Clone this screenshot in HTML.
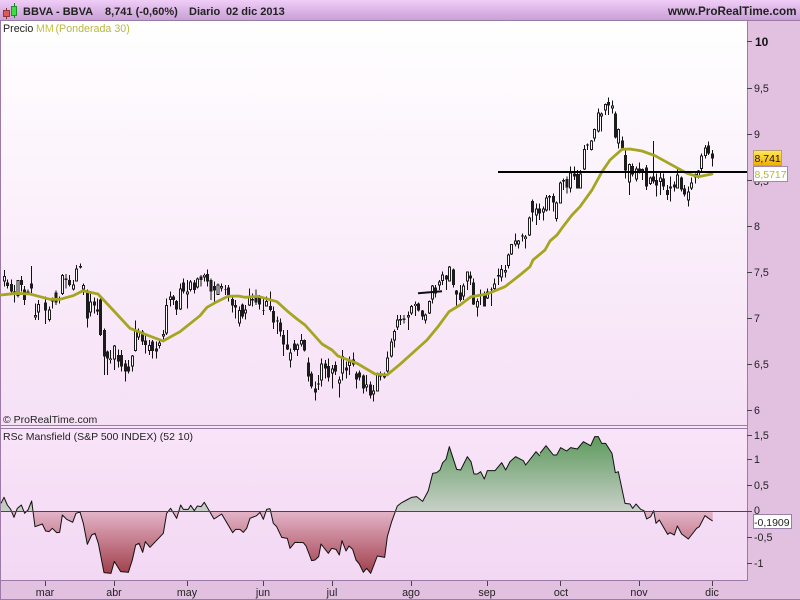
<!DOCTYPE html>
<html><head><meta charset="utf-8"><title>BBVA</title>
<style>
html,body{margin:0;padding:0;background:#e2c0e0}
svg{display:block}
text{font-family:"Liberation Sans",Arial,sans-serif;font-size:10.7px;fill:#222}
</style></head><body>
<svg width="800" height="600" viewBox="0 0 800 600" xmlns="http://www.w3.org/2000/svg">
<defs>
<linearGradient id="h" x1="0" y1="0" x2="0" y2="1"><stop offset="0" stop-color="#f0cdf7"/><stop offset="1" stop-color="#c8a0d6"/></linearGradient>
<linearGradient id="m" x1="0" y1="0" x2="0" y2="1"><stop offset="0" stop-color="#ffffff"/><stop offset="1" stop-color="#f6e0f6"/></linearGradient>
<linearGradient id="l" x1="0" y1="0" x2="0" y2="1"><stop offset="0" stop-color="#f8e4f8"/><stop offset="1" stop-color="#f3d8f4"/></linearGradient>
<linearGradient id="g" x1="0" y1="0" x2="0" y2="1"><stop offset="0" stop-color="#ffe95a"/><stop offset="1" stop-color="#f0ae00"/></linearGradient>
<linearGradient id="a" gradientUnits="userSpaceOnUse" x1="0" y1="50" x2="0" y2="460">
<stop offset="0" stop-color="#5c9a5c"/><stop offset=".546" stop-color="#c9d0c9"/><stop offset=".546" stop-color="#e4b4c8"/><stop offset="1" stop-color="#a2404c"/></linearGradient>
</defs>
<rect width="800" height="600" fill="#e2c0e0"/>
<rect width="800" height="20" fill="url(#h)"/>
<rect y="20" width="800" height="1" fill="#9c7aa8"/>
<rect x="1" y="21" width="746" height="404" fill="url(#m)"/>
<rect x="1" y="426" width="746" height="154" fill="url(#l)"/>
<rect y="425" width="747" height="1" fill="#9c7aa8"/>
<rect y="428" width="747" height="1" fill="#9c7aa8"/>
<rect y="580" width="747" height="1" fill="#9c7aa8"/>
<rect x="747" y="21" width="1" height="560" fill="#9c7aa8"/>
<rect x="0" y="20" width="1" height="580" fill="#9c7aa8"/>
<rect y="599" width="800" height="1" fill="#9c7aa8"/>

<g shape-rendering="crispEdges">
<path d="M6.500 8V19" stroke="#803030" fill="none"/><rect x="3.500" y="10.500" width="6" height="6" fill="#e05858" stroke="#903838"/>
<path d="M14.500 3V18" stroke="#208020" fill="none"/><rect x="11.500" y="6.500" width="5" height="9" fill="#40dc48" stroke="#209028"/>
</g>
<text x="23" y="15" style="font-weight:bold;font-size:11px">BBVA - BBVA</text>
<text x="105" y="15" style="font-weight:bold;font-size:11px">8,741 (-0,60%)</text>
<text x="189" y="15" style="font-weight:bold;font-size:11px">Diario</text>
<text x="226" y="15" style="font-weight:bold;font-size:11px">02 dic 2013</text>
<text x="796.500" y="15" text-anchor="end" style="font-weight:bold;font-size:11.700px">www.ProRealTime.com</text>
<text x="3" y="32">Precio</text><text x="36" y="32" style="fill:#c8c040">MM</text><text x="55.500" y="32" style="fill:#b8b840">(Ponderada 30)</text>

<g fill="none" stroke-linecap="butt" shape-rendering="crispEdges">
<g transform="translate(0 250) scale(.33333)">
<path stroke="#111" stroke-width="3" d="M13 60V110M23 88V115M34 88V135M44 105V158M54 90V142M64 78V125M74 108V165M84 118V135M94 48V130M106 160V210M116 150V210M136 140V222M148 170V215M158 142V175M168 122V165M178 140V160M188 72V135M198 72V115M208 75V110M220 90V122M230 45V95M241 40V55M250 100V135M262 118V232M271 130V200M283 142V190M293 145V195M302 135V258M313 235V375M323 302V375M332 300V340M344 285V360M356 298V352M364 300V365M376 330V395M386 330V370M397 315V365M407 212V305M416 235V270M428 240V285M437 255V310M449 270V315M458 270V325M469 275V325M478 265V295M490 240V270M500 145V255M511 125V170M520 135V165M530 150V195M542 100V180M551 85V130M562 90V175M572 90V125M583 90V130M592 82V115"/>
<path stroke="#1c1c1c" stroke-width="9" d="M13 78V95M23 97V108M34 102V125M44 125V130M54 90V138M64 90V105M74 118V150M84 125V132M94 100V115M106 195V203M116 162V188M136 158V182M148 178V210M158 146V154M168 128V158M178 145V152M188 75V132M198 85V90M208 90V105M220 103V118M230 55V95M241 48V52M250 105V118M262 125V205M271 155V188M283 155V167M293 178V185M302 148V255M313 240V320M323 305V325M332 325V330M344 287V328M356 315V335M364 315V350M376 340V365M386 350V365M397 317V350M407 240V303M416 242V262M428 245V275M437 272V285M449 285V303M458 275V303M469 295V305M478 278V288M490 252V260M500 165V250M511 140V150M520 140V150M530 153V178M542 115V178M551 97V125M562 125V133M572 95V120M583 98V120M592 85V112"/>
<path stroke="#fff" stroke-width="3" d="M13 81V92M54 93V135M106 198V200M116 165V185M148 181V207M158 149V151M188 78V129M220 106V115M230 58V92M250 108V115M271 158V185M332 327V328M344 290V325M397 320V347M407 243V300M416 245V259M449 288V300M478 281V285M490 255V257M500 168V247M511 143V147M542 118V175M562 127V131M572 98V117M592 88V109"/>
</g>
<g transform="translate(200 250) scale(.33333)">
<path stroke="#111" stroke-width="3" d="M3 75V110M13 70V95M22 58V110M33 85V150M43 95V155M54 100V135M64 100V125M76 105V135M85 105V155M97 135V188M106 150V205M118 170V230M127 160V205M136 165V208M148 115V168M157 130V170M168 118V165M178 135V178M190 140V195M199 140V170M211 125V185M220 170V237M232 200V252M241 205V260M250 240V318M262 240V300M271 295V352M283 270V305M292 280V318M304 252V290M313 268V305M325 322V395M334 365V415M346 395V452M355 375V420M364 325V410M376 330V385M385 325V395M397 345V415M406 335V375M418 380V443M427 300V392M439 335V385M448 320V375M460 307V350M469 365V415M478 362V392M490 373V430M499 375V425M511 395V445M520 405V455M532 368V425M541 365V392M553 368V385M562 305V368M574 265V322M583 238V292M592 195V240"/>
<path stroke="#1c1c1c" stroke-width="9" d="M3 80V90M13 75V82M22 72V95M33 90V125M43 108V122M54 103V135M64 108V116M76 117V119M85 112V138M97 147V167M106 165V173M118 180V221M127 163V200M136 178V191M148 138V166M157 147V152M168 140V158M178 143V163M190 180V182M199 153V170M211 168V180M220 183V218M232 212V215M241 217V245M250 255V283M262 283V298M271 307V332M283 280V300M292 283V300M304 270V283M313 270V302M325 337V380M334 370V410M346 415V428M355 400V404M364 340V392M376 340V355M385 348V382M397 355V370M406 345V365M418 388V400M427 318V370M439 352V362M448 335V348M460 328V343M469 370V388M478 368V382M490 376V415M499 403V413M511 403V436M520 422V434M532 370V425M541 375V380M553 370V382M562 322V365M574 275V320M583 243V272M592 208V233"/>
<path stroke="#fff" stroke-width="3" d="M13 77V80M54 106V132M64 111V113M118 183V218M136 181V188M148 141V163M199 156V167M271 310V329M292 286V297M304 273V280M364 343V389M397 358V367M418 391V397M427 321V367M448 338V345M499 405V410M520 425V431M532 373V422M562 325V362M574 278V317M583 246V269M592 211V230"/>
</g>
<g transform="translate(380 170) scale(.33333)">
<path stroke="#111" stroke-width="3" d="M62 435V465M72 435V460M85 425V480M95 405V435M106 395V438M116 398V425M127 420V450M136 430V460M148 392V432M157 345V400M167 345V382M178 330V360M187 305V345M199 315V360M208 288V335M220 295V352M230 360V408M241 345V395M250 340V390M262 305V360M271 305V345M280 325V405M292 385V440M302 358V405M313 365V410M322 355V387M334 352V408M343 325V360M355 295V345M364 285V335M376 285V322M385 250V295M395 222V255M406 190V230M415 210V235M427 190V215M436 195V235M448 140V198M458 88V155M470 100V165M478 100V150M490 110V152M499 75V125M508 75V122M520 70V125M529 95V155M541 35V100"/>
<path stroke="#1c1c1c" stroke-width="9" d="M62 447V451M72 445V450M85 435V442M95 408V430M106 402V408M116 400V422M127 422V440M136 433V452M148 393V431M157 346V388M167 352V370M178 335V347M187 313V333M199 317V328M208 290V335M220 298V345M230 362V374M241 367V390M250 347V380M262 305V335M271 317V326M280 337V403M292 393V412M302 375V378M313 375V410M322 365V385M334 357V359M343 340V357M355 315V320M364 297V322M376 300V308M385 253V288M395 222V254M406 212V223M415 212V224M427 197V200M436 200V207M448 142V197M458 93V128M470 115V137M478 115V130M490 115V128M499 82V122M508 78V82M520 78V98M529 97V147M541 37V100"/>
<path stroke="#fff" stroke-width="3" d="M85 438V439M95 411V427M106 404V406M136 436V449M148 396V428M157 349V385M178 338V344M187 316V330M208 293V332M250 350V377M262 308V332M292 396V409M322 368V382M343 343V354M364 300V319M376 303V305M385 256V285M395 225V251M406 215V220M415 215V221M436 202V205M448 145V194M470 118V134M490 118V125M499 85V119M529 100V144M541 40V97"/>
</g>
<g transform="translate(560 0) scale(.33333)">
<path stroke="#111" stroke-width="3" d="M10 535V570M21 530V580M31 500V578M43 500V540M52 510V565M62 510V565M73 435V510M82 430V450M94 420V452M104 385V425M115 325V397M124 337V395M136 310V345M145 292V345M157 302V340M166 335V415M175 385V445M187 410V450M196 450V535M208 490V585M217 490V530M229 500V545M238 487V520M247 505V540M259 495V570M271 530V555M280 423V550M289 520V590M301 515V585M310 520V570M322 555V600M331 530V605M343 545V575M352 508V565M364 530V575M373 555V590M385 560V620M394 532V570M406 520V550M415 510V535M424 460V515M436 435V475M445 425V465M457 450V500"/>
<path stroke="#1c1c1c" stroke-width="9" d="M10 540V545M21 537V563M31 517V565M43 520V530M52 522V565M62 520V565M73 447V508M82 433V436M94 422V450M104 387V415M115 337V395M124 340V350M136 312V332M145 306V316M157 316V326M166 340V412M175 387V430M187 422V445M196 465V512M208 492V547M217 498V524M229 505V538M238 505V515M247 507V515M259 502V560M271 532V552M280 530V545M289 540V557M301 532V546M310 535V560M322 570V585M331 560V565M343 553V563M352 523V565M364 532V568M373 565V583M385 575V602M394 547V565M406 522V532M415 512V530M424 467V507M436 442V468M445 436V460M457 460V475"/>
<path stroke="#fff" stroke-width="3" d="M31 520V562M62 523V562M73 450V505M94 425V447M104 390V412M115 340V392M124 343V347M136 315V329M157 319V323M175 390V427M208 495V544M229 508V535M271 535V549M301 535V543M352 526V562M385 578V599M394 550V562M406 525V529M415 515V527M424 470V504M436 445V465"/>
</g>
</g>

<path fill="none" stroke="#a5a520" stroke-width="2.800" stroke-linejoin="round" stroke-linecap="round" d="M1 295L7 294.300 17 293.300 30 294 40 296.700 50 299.300 60 299.300 73 295.700 83 290.700 98 294 113 310 130 328.300 147 335 163 341 180 331.700 200 315.700 207 307.300 217 301.700 228 296.300 238 296 245 297.300 258 296.300 277 301.700 288 311.700 297 319 305 325 322 344 332 350 338 356 357 363.300 375 374 387 375 400 364.300 427 340 438 326.700 449 311.700 460 305 471 296.700 487 294 505 286.700 520 275 530 266.700 533 260 545 250 550 241 557 235 563 226.700 572 215 580 206.700 592 190 602 171.700 610 160 622 149.300 630 149 642 151 655 155.700 675 166.700 687 173.300 698 176.700 712 174"/>
<rect x="498" y="171" width="249" height="2" fill="#000"/>
<path d="M418 293.300L442 291.300" stroke="#111" stroke-width="2" fill="none"/>

<text x="3" y="423" style="font-size:10.500px">© ProRealTime.com</text>
<text x="3" y="440" style="font-size:10.500px">RSc Mansfield (S&amp;P 500 INDEX) (52 10)</text>

<g transform="translate(0 420) scale(.33333)">
<path fill="url(#a)" d="M3 274L3 250 12 232 22 255 32 268 42 292 52 265 64 255 74 280 84 270 95 243 105 320 127 312 137 333 147 335 157 325 170 338 179 337 187 285 200 298 218 307 228 280 240 276 250 310 262 373 275 345 285 340 295 370 312 458 333 460 343 424 362 455 385 457 397 420 407 375 417 370 428 397 436 365 450 382 490 340 500 280 512 265 530 295 542 255 550 268 565 268 572 256 583 272 592 258 603 260 613 247 635 285 642 297 665 282 698 338 707 328 720 328 730 337 740 325 750 295 770 287 780 277 790 298 800 268 810 266 810 274Z"/>
<path fill="none" stroke="#111" stroke-width="3" stroke-linejoin="round" d="M3 250L12 232 22 255 32 268 42 292 52 265 64 255 74 280 84 270 95 243 105 320 127 312 137 333 147 335 157 325 170 338 179 337 187 285 200 298 218 307 228 280 240 276 250 310 262 373 275 345 285 340 295 370 312 458 333 460 343 424 362 455 385 457 397 420 407 375 417 370 428 397 436 365 450 382 490 340 500 280 512 265 530 295 542 255 550 268 565 268 572 256 583 272 592 258 603 260 613 247 635 285 642 297 665 282 698 338 707 328 720 328 730 337 740 325 750 295 770 287 780 277 790 298 800 268 810 266"/>
</g>
<g transform="translate(270 420) scale(.33333)">
<path fill="url(#a)" d="M0 274L0 266 10 310 20 320 35 352 52 355 60 385 75 367 100 368 108 378 125 422 135 420 146 410 153 372 175 400 185 385 198 388 208 405 216 362 228 393 237 378 248 388 258 420 268 432 280 457 290 445 302 460 322 408 344 412 352 350 365 305 382 258 395 248 410 240 425 232 440 230 458 244 475 212 488 160 500 158 510 150 518 128 528 118 538 80 560 148 572 150 592 110 603 125 612 162 622 162 632 155 643 177 652 152 675 152 695 128 707 150 720 125 737 110 760 122 767 135 798 95 810 108 810 274Z"/>
<path fill="none" stroke="#111" stroke-width="3" stroke-linejoin="round" d="M0 266L10 310 20 320 35 352 52 355 60 385 75 367 100 368 108 378 125 422 135 420 146 410 153 372 175 400 185 385 198 388 208 405 216 362 228 393 237 378 248 388 258 420 268 432 280 457 290 445 302 460 322 408 344 412 352 350 365 305 382 258 395 248 410 240 425 232 440 230 458 244 475 212 488 160 500 158 510 150 518 128 528 118 538 80 560 148 572 150 592 110 603 125 612 162 622 162 632 155 643 177 652 152 675 152 695 128 707 150 720 125 737 110 760 122 767 135 798 95 810 108"/>
</g>
<g transform="translate(540 420) scale(.33333)">
<path fill="url(#a)" d="M0 274L0 100 18 77 40 105 50 105 62 83 80 93 92 83 112 87 130 65 152 77 164 50 175 50 185 70 197 70 216 100 226 158 235 155 255 250 270 252 278 265 288 252 302 268 312 272 320 297 332 290 341 272 348 310 358 300 383 343 390 338 403 345 412 318 425 342 445 357 470 325 478 320 495 287 510 298 518 303 518 274Z"/>
<path fill="none" stroke="#111" stroke-width="3" stroke-linejoin="round" d="M0 100L18 77 40 105 50 105 62 83 80 93 92 83 112 87 130 65 152 77 164 50 175 50 185 70 197 70 216 100 226 158 235 155 255 250 270 252 278 265 288 252 302 268 312 272 320 297 332 290 341 272 348 310 358 300 383 343 390 338 403 345 412 318 425 342 445 357 470 325 478 320 495 287 510 298 518 303"/>
</g>
<rect x="1" y="511" width="746" height="1" fill="#3a3ab8"/>

<path stroke="#444" fill="none" shape-rendering="crispEdges" d="M747 41.500H752M747 88.500H752M747 134.500H752M747 180.500H752M747 226.500H752M747 272.500H752M747 318.500H752M747 364.500H752M747 410.500H752M747 435.500H752M747 459.500H752M747 485.500H752M747 511.500H752M747 537.500H752M747 563.500H752M45.500 581V586M114.500 581V586M187.500 581V586M263.500 581V586M332.500 581V586M411.500 581V586M487.500 581V586M560.500 581V586M639.500 581V586M712.500 581V586"/>
<text x="755" y="46" style="font-weight:bold;font-size:12px;fill:#111">10</text>
<text x="754" y="92">9,5</text><text x="754" y="138">9</text><text x="754" y="185">8,5</text><text x="754" y="230">8</text><text x="754" y="276">7,5</text><text x="754" y="322">7</text><text x="754" y="368">6,5</text><text x="754" y="414">6</text>
<text x="754" y="439">1,5</text><text x="754" y="463">1</text><text x="754" y="489">0,5</text><text x="754" y="514">0</text><text x="754" y="541">-0,5</text><text x="754" y="567">-1</text>
<text x="45" y="596" text-anchor="middle">mar</text><text x="114" y="596" text-anchor="middle">abr</text><text x="187" y="596" text-anchor="middle">may</text><text x="263" y="596" text-anchor="middle">jun</text><text x="332" y="596" text-anchor="middle">jul</text><text x="411" y="596" text-anchor="middle">ago</text><text x="487" y="596" text-anchor="middle">sep</text><text x="561" y="596" text-anchor="middle">oct</text><text x="639" y="596" text-anchor="middle">nov</text><text x="712" y="596" text-anchor="middle">dic</text>

<rect x="753.500" y="150.500" width="28" height="15" fill="url(#g)" stroke="#b8a070"/>
<text x="754.500" y="162" style="fill:#111;font-size:10.500px">8,741</text>
<rect x="753.500" y="166.500" width="34" height="15" fill="#fff" stroke="#a088b0"/>
<text x="754.500" y="178" style="fill:#b5b53a;font-size:10.500px">8,5717</text>
<rect x="753.500" y="514.500" width="38" height="14" fill="#fff" stroke="#9880a8"/>
<text x="754" y="526" style="fill:#222;font-size:10.500px">-0,1909</text>
</svg>
</body></html>
